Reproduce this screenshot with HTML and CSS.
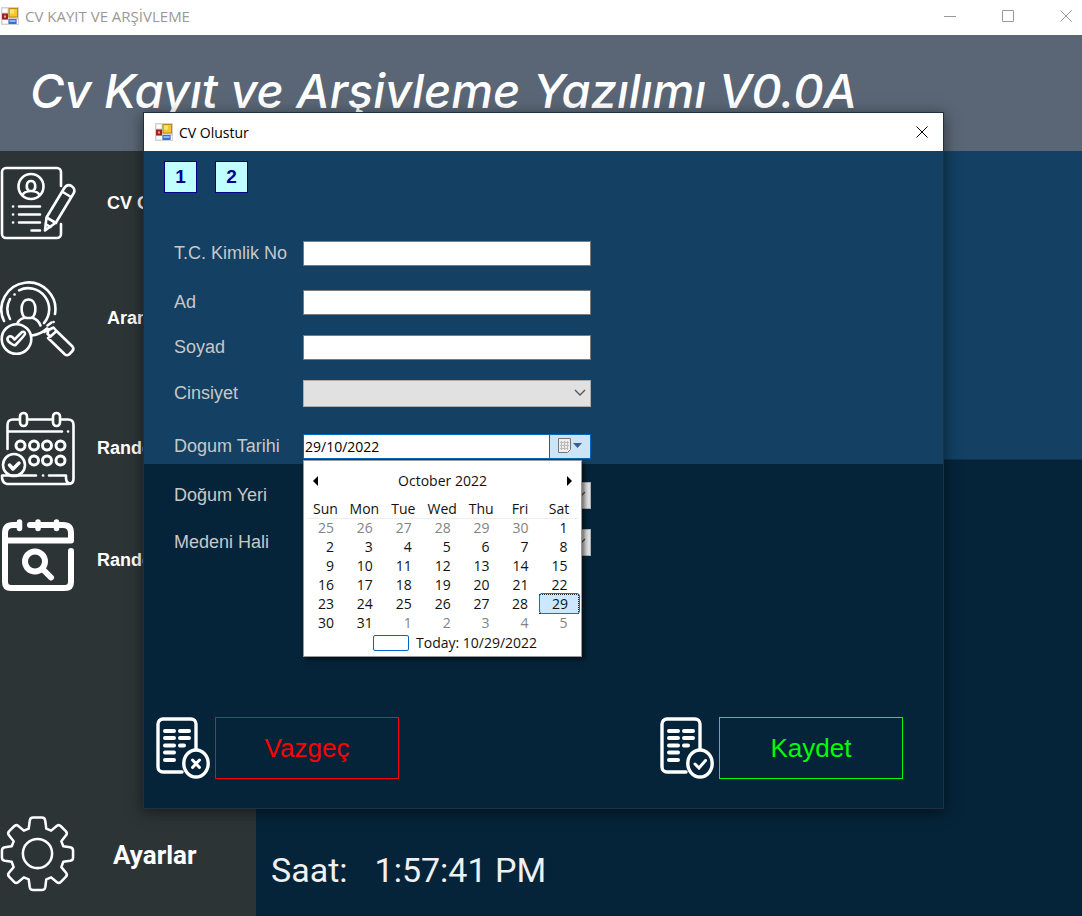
FILE: index.html
```
<!DOCTYPE html>
<html lang="tr">
<head>
<meta charset="utf-8">
<title>CV KAYIT VE ARŞİVLEME</title>
<link rel="stylesheet" href="styles.css">
</head>
<body>
<svg width="0" height="0" class="defs" aria-hidden="true">
  <symbol id="app" viewBox="0 0 18 18">
    <rect width="18" height="18" fill="#d2d2d2"/>
    <path d="M1.500 1.500h5v4h-5zM1.500 13h5.500v3.500h-5.500z" fill="#fff"/>
    <rect x="16" y="13" width="1" height="4" fill="#fff"/>
    <rect x="7.500" y="1" width="9.500" height="9.500" fill="#b98a14"/>
    <rect x="8.500" y="2" width="7.500" height="7.500" fill="#f6c82e"/>
    <rect x="9" y="2.500" width="4" height="4" fill="#fce07a"/>
    <rect x="1" y="6.500" width="6" height="6" fill="#a81e1e"/>
    <rect x="3" y="8.500" width="2" height="2" fill="#f3a0a0"/>
    <rect x="7.500" y="12" width="8" height="5" fill="#3c6fd0"/>
    <rect x="8.500" y="13" width="6" height="2" fill="#8db4f5"/>
  </symbol>
  <symbol id="doc" viewBox="0 0 54 62">
    <g fill="none" stroke="#fff" stroke-width="3.400" stroke-linecap="round">
      <path d="M26 55H7a5 5 0 0 1-5-5V7a5 5 0 0 1 5-5h28a5 5 0 0 1 5 5v25"/>
      <path stroke-width="4" d="M9 14h9M24 14h9M9 21h9M24 21h9M9 28.500h9M24 28.500h4M9 35.500h9M9 43h9"/>
      <ellipse cx="40" cy="46.500" rx="12.200" ry="13.500"/>
    </g>
  </symbol>
</svg>
<div class="window">
  <header class="titlebar">
    <svg class="app-icon"><use href="#app"/></svg>
    <span class="caption">CV KAYIT VE ARŞİVLEME</span>
    <div class="controls">
      <button aria-label="Minimize"><svg width="14" height="14"><path d="M1 7.500h12"/></svg></button>
      <button aria-label="Maximize"><svg width="14" height="14"><path d="M1.500 1.500h11v11h-11z"/></svg></button>
      <button aria-label="Close"><svg width="14" height="14"><path d="M1.500 1.500l11 11M12.500 1.500l-11 11"/></svg></button>
    </div>
  </header>
  <div class="banner"><h1>Cv Kayıt ve Arşivleme Yazılımı V0.0A</h1></div>
  <div class="content">
    <nav class="sidebar">
      <a href="#" class="item">
        <svg viewBox="0 0 75 75" class="nav-icon"><path d="M61 20V6a4 4 0 0 0-4-4H6a4 4 0 0 0-4 4v62a4 4 0 0 0 4 4h51a4 4 0 0 0 4-4V58"/><circle cx="31" cy="20.500" r="12.500"/><path d="M31 15c-5.500 0-5 8.500-2 10h4c3-1.500 3.500-10-2-10zM22.500 29q2-4 8.500-4t8.500 4"/><path d="M19 40.500h21M19 48.500h21M19 56.500h21M31.500 64.500h8.500M13 40.500h.1M13 48.500h.1M13 56.500h.1"/><path d="M45 64.500l1.500-13L64 22.500q3-5 7.500-2.500 4.500 3 2 7.500L56 56.500zM46.500 51.500l9.500 5.500M62 25.500l9 5.500M45.500 58l5 3"/></svg>
        <span>CV Oluştur</span></a>
      <a href="#" class="item search">
        <svg viewBox="0 0 75 75" class="nav-icon"><path d="M4 40A27 27 0 1 1 55 33M47 47.500A27 27 0 0 1 32 54.500M10 38A21 21 0 0 1 10 18M19 9.300A21 21 0 0 1 44 42M53.500 41h.1M14.500 13.500h.1"/><path d="M28.500 18.500c-9 0-8.500 17-2.500 18.500h5c6-1.500 6.500-18.500-2.500-18.500zM17.500 42q1.500-4 8-5.500M31.500 36.500q6.500 1.500 9 8"/><circle cx="16.500" cy="58" r="14.800"/><path d="M8 60q-1.500-3 1-4.500 3-1 5.500 3l7.500-7.500q3-1 3 2 0 1-9.500 11-2 1-7.500-4z"/><path d="M47.500 44.500l4-3M44.500 51l4-3M48.500 49l5-2.500 3 3.500-6 5.500-3-2.500zM50.500 55.500l6-5.500 16 15.500q2 2.500-.5 5l-3 3q-2 1.500-4 0L48 57z"/></svg>
        <span>Arama</span></a>
      <a href="#" class="item calendar">
        <svg viewBox="0 0 75 75" class="nav-icon"><path d="M7.500 38V14q0-5.500 5.500-5.500h6M28 8.500h24M61 8.500h7q5.500 0 5.500 5.500v54q0 5-5.500 5H7q-5.500-1-5-8.500h34M8 20.500h54M68 20.500h.1M43 64.500h.1M49 64.500h17v3q.5 5 4 5"/><rect x="20" y="2" width="7" height="13" rx="3.500"/><rect x="53" y="2" width="7" height="13" rx="3.500"/><g stroke-width="3"><circle cx="20.500" cy="34.500" r="4.500"/><circle cx="34" cy="34.500" r="4.500"/><circle cx="47" cy="34.500" r="4.500"/><circle cx="60.500" cy="34.500" r="4.500"/><circle cx="34" cy="49.500" r="4.500"/><circle cx="47" cy="49.500" r="4.500"/><circle cx="60.500" cy="49.500" r="4.500"/></g><circle cx="14" cy="54" r="11"/><path stroke-width="3.500" d="M9.500 54l3.500 4 6-6"/></svg>
        <span>Randevu</span></a>
      <a href="#" class="item lookup">
        <svg viewBox="0 0 75 75" class="nav-icon"><g stroke-width="6"><path d="M19 7h-6q-8 0-8 8v49q0 6 6 6h54q6 0 6-6V33M5 22.500h66V15q0-8-8-8H30M5 22.500v-3"/><path stroke-width="5.500" d="M19.500 4v6.500M38 4v6.500M56.500 4v6.500"/><circle cx="35" cy="43.500" r="10"/><path d="M43 51.500l8 8"/></g></svg>
        <span>Randevu</span></a>
      <a href="#" class="item settings">
        <svg viewBox="-1 1 77 77" class="nav-icon"><path d="M29.500 5q.5-3.500 3.500-3.500h9q3 0 3.500 3.500l1 8 5 2 6-5q2-1.500 4 .5l5 5q2 2 .5 4l-5 6.500 2 5 7 1q3 .5 3 3.500v7q0 3-3 3.500l-7 1-2 5.500 5 6q1.500 2-.5 4l-5 5q-2 2-4 .5l-6-5-5 2-1 8q-.5 3-3.500 3h-9q-3 0-3.500-3l-1-8-5-2-6 5q-2 1.500-4-.5l-5-5q-2-2-.5-4l5-6-2-5.500-7-1q-3-.5-3-3.500v-7q0-3 3-3.500l7-1 2-5-5-6.500q-1.500-2 .5-4l5-5q2-2 4-.5l6 5 5-2z"/><circle cx="37.500" cy="38.500" r="15"/></svg>
        <span>Ayarlar</span></a>
    </nav>
    <main class="stage">
      <p class="clock"><span>Saat:</span><time>1:57:41 PM</time></p>
    </main>
  </div>

  <section class="dialog" role="dialog" aria-labelledby="dlg-title">
    <header class="dialog-bar">
      <svg class="app-icon"><use href="#app"/></svg>
      <span id="dlg-title">CV Olustur</span>
      <button class="close" aria-label="Close"><svg width="14" height="14"><path d="M1.500 1.500l11 11M12.500 1.500l-11 11"/></svg></button>
    </header>
    <form class="dialog-body">
      <div class="steps"><button type="button">1</button><button type="button">2</button></div>
      <div class="fields">
        <label for="tc">T.C. Kimlik No</label><input id="tc" type="text">
        <label for="ad">Ad</label><input id="ad" type="text">
        <label for="soyad">Soyad</label><input id="soyad" type="text">
        <label for="cins">Cinsiyet</label><select id="cins"><option></option></select>
        <label for="tarih">Dogum Tarihi</label>
        <div class="date">
          <input id="tarih" type="text" value="29/10/2022">
          <button type="button" aria-label="Takvim"><svg width="28" height="18"><path d="M2.500 1.500h12v11l-3 3h-9z" fill="#eee" stroke="#7a7472"/><path d="M4 5.500h9M4 8.500h9M4 11.500h8M5.500 4v9M8.500 4v9M11.500 4v9" stroke="#bbb" fill="none"/><path d="M17 6h9l-4.500 5z" fill="#3d5f8f"/></svg></button>
          <div class="picker">
            <div class="picker-head">
              <button type="button" aria-label="Previous"><svg width="5" height="10"><path d="M5 0v10L0 5z"/></svg></button>
              <span>October 2022</span>
              <button type="button" aria-label="Next"><svg width="5" height="10"><path d="M0 0v10l5-5z"/></svg></button>
            </div>
            <table>
              <thead><tr><th>Sun</th><th>Mon</th><th>Tue</th><th>Wed</th><th>Thu</th><th>Fri</th><th>Sat</th></tr></thead>
              <tbody>
                <tr><td class="out">25</td><td class="out">26</td><td class="out">27</td><td class="out">28</td><td class="out">29</td><td class="out">30</td><td>1</td></tr>
                <tr><td>2</td><td>3</td><td>4</td><td>5</td><td>6</td><td>7</td><td>8</td></tr>
                <tr><td>9</td><td>10</td><td>11</td><td>12</td><td>13</td><td>14</td><td>15</td></tr>
                <tr><td>16</td><td>17</td><td>18</td><td>19</td><td>20</td><td>21</td><td>22</td></tr>
                <tr><td>23</td><td>24</td><td>25</td><td>26</td><td>27</td><td>28</td><td class="selected">29</td></tr>
                <tr><td>30</td><td>31</td><td class="out">1</td><td class="out">2</td><td class="out">3</td><td class="out">4</td><td class="out">5</td></tr>
              </tbody>
            </table>
            <div class="today"><i></i><span>Today: 10/29/2022</span></div>
          </div>
        </div>
        <label for="yer">Doğum Yeri</label><select id="yer"><option></option></select>
        <label for="medeni">Medeni Hali</label><select id="medeni"><option></option></select>
      </div>
      <div class="actions">
        <div class="action">
          <svg class="doc-icon" viewBox="0 0 54 62"><use href="#doc"/><path d="M36.500 43l7 7.500M43.500 43l-7 7.500"/></svg>
          <button type="button" class="cancel">Vazgeç</button>
        </div>
        <div class="action">
          <svg class="doc-icon" viewBox="0 0 54 62"><use href="#doc"/><path d="M35 47l4 4 6.500-7.500"/></svg>
          <button type="button" class="save">Kaydet</button>
        </div>
      </div>
    </form>
  </section>
</div>
</body>
</html>
```
FILE: styles.css
```
* { box-sizing: border-box; }
body { margin: 0; font-family: "Liberation Sans", Arial, sans-serif; }
button { margin: 0; padding: 0; border: 0; background: none; font: inherit; color: inherit; }
.defs { position: absolute; }

.window { position: relative; display: flex; flex-direction: column; min-height: 100vh; overflow: hidden; }
.titlebar { display: flex; align-items: center; height: 35px; padding: 0 9px 4px 1px; background: #fff; color: #999; font: 15px "Open Sans", sans-serif; }
.app-icon { width: 18px; height: 18px; margin-right: 6px; }
.controls { display: flex; gap: 44px; margin-left: auto; }
.controls button, .close { display: flex; }
.controls path { fill: none; stroke: #999; }

.banner { height: 116px; padding: 28px 30px; background: #5a6675; color: #fff; }
.banner h1 { margin: 0; font: italic 500 47px/56px Inter, sans-serif; white-space: nowrap; }

.content { display: flex; flex: 1; }
.sidebar { display: flex; flex-direction: column; width: 256px; padding: 15px 0 24px; background: #2d3436; }
.item { display: flex; align-items: center; gap: 32px; color: #fff; font-size: 18px; font-weight: bold; text-decoration: none; white-space: nowrap; }
.nav-icon { width: 75px; height: 75px; flex: none; overflow: visible; fill: none; stroke: #fff; stroke-width: 2.6; stroke-linecap: round; stroke-linejoin: round; }
.search { margin-top: 40px; }
.calendar { margin-top: 55px; gap: 22px; }
.lookup { margin-top: 32px; gap: 22px; }
.lookup span { padding-top: 10px; }
.settings { margin-top: auto; gap: 38px; font: bold 26px Roboto, sans-serif; }
.stage { display: flex; flex: 1; align-items: flex-end; padding: 0 15px 22px; background: linear-gradient(#134063 0 308px, #052439 309px); }
.clock { display: flex; gap: 27px; margin: 0; color: #f0f0f0; font: 34px/48px Roboto, sans-serif; }

.dialog { position: absolute; top: 112px; left: 143px; right: 138px; border: 1px solid #1f3040; box-shadow: 0 3px 14px rgba(0, 0, 0, .5); }
.dialog-bar { display: flex; align-items: center; height: 38px; padding: 0 14px 0 11px; background: #fff; color: #000; font: 14px "Open Sans", sans-serif; }
.close { margin-left: auto; }
.close path { fill: none; stroke: #000; }
.dialog-body { display: flex; flex-direction: column; padding: 10px 40px 29px 12px; background: linear-gradient(#134063 0 313px, #052439 313px); }
.steps { display: flex; gap: 18px; padding-left: 8px; }
.steps button { width: 33px; height: 32px; border: 1px solid #00008b; background: #c0ffff; color: #00008b; font-size: 19px; font-weight: bold; }
.fields { display: grid; grid-template-columns: 129px 288px; grid-template-rows: 48px 50px 40px 52px 54px 44px 50px; align-items: center; margin-top: 36px; padding-left: 18px; color: #c8c8c8; font-size: 18px; }
.fields input, .fields select { width: 100%; height: 25px; margin: 0; border: 1px solid #7a7a7a; border-radius: 0; background-color: #fff; }
.fields select { height: 27px; border-color: #adadad; background: #e1e1e1 url("data:image/svg+xml,%3Csvg xmlns='http://www.w3.org/2000/svg' width='12' height='8'%3E%3Cpath d='M1 1l5 5 5-5' fill='none' stroke='%23555' stroke-width='1.300'/%3E%3C/svg%3E") no-repeat right 4px center; appearance: none; }
.fields .date { position: relative; display: flex; height: 25px; border: 1px solid #0067b8; background: #fff; }
.fields .date > input { flex: 1; min-width: 0; height: 23px; padding: 0 1px; border: 0; color: #000; font: 14px "Open Sans", sans-serif; }
.date > button { display: flex; align-items: center; justify-content: center; width: 41px; border-left: 1px solid #0067b8; background: #cce4f7; }
.picker { position: absolute; top: 25px; left: -1px; z-index: 1; width: 279px; padding: 9px 2px 3px; border: 1px solid #999; background: #fff; color: #111; font: 14px/19px "Open Sans", sans-serif; box-shadow: 3px 3px 4px rgba(0, 0, 0, .5); }
.picker-head { display: flex; align-items: center; justify-content: space-between; height: 22px; padding: 0 7px; }
.picker-head button { display: flex; }
.picker table { width: 273px; margin-top: 7px; border-collapse: collapse; table-layout: fixed; }
.picker th { height: 19px; padding: 0; font-weight: normal; text-align: center; }
.picker thead { border-bottom: 1px solid #eee; }
.picker td { height: 19px; padding: 0 11px 0 0; line-height: 17px; text-align: right; }
.picker .out { color: #838383; }
.picker .selected { background: #cce8ff; border: 1px dotted #222; padding-right: 10px; outline: 1px solid #0078d7; border-radius: 2px; }
.today { display: flex; align-items: center; gap: 7px; height: 21px; padding-left: 67px; }
.today i { width: 36px; height: 16px; border: 1px solid #0067c8; border-radius: 2px; }

.actions { display: flex; justify-content: space-between; margin-top: 150px; }
.action { display: flex; gap: 5px; }
.doc-icon { width: 54px; height: 62px; fill: none; stroke: #fff; stroke-width: 3; stroke-linecap: round; }
.action button { width: 184px; height: 62px; font-size: 26px; }
.action .cancel { border: 1px solid #f00; color: #f00; }
.action .save { border: 1px solid #0f0; color: #0f0; }
```
